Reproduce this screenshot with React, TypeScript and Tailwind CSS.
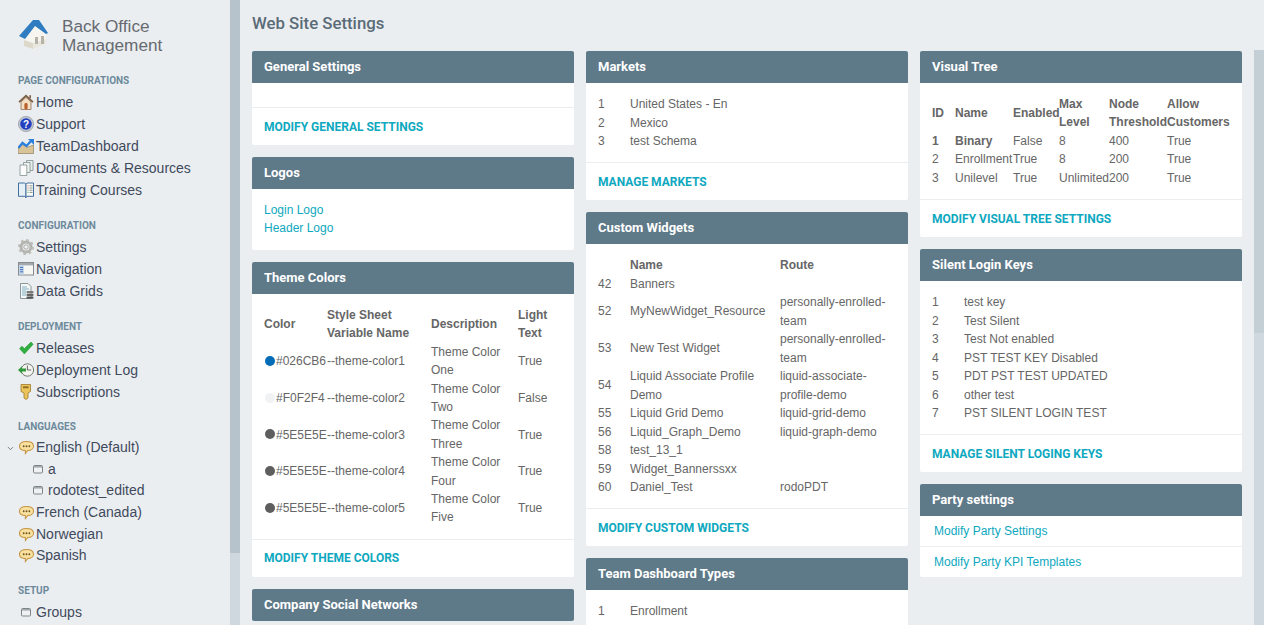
import type { ReactNode } from 'react'
import { ChevronDown } from 'lucide-react'

const HouseLogo = () => (
  <svg width="32" height="32" viewBox="0 0 32 32" className="shrink-0 mb-[3px]">
    <path d="M7 20 L17 7 L28 15 L28 25 L15 30 L6 27 Z" fill="#f6f5f0" />
    <path d="M6 21 L15 24 L15 30 L6 27 Z" fill="#dcd9cb" />
    <path d="M15 24 L28 20 L28 25 L15 30 Z" fill="#e9e7dd" />
    <rect x="17" y="18" width="3" height="7" fill="#b5b3a8" />
    <rect x="23" y="17" width="3" height="8" fill="#b5b3a8" />
    <path d="M1 17 L15 1 L21 1 L30 14 L28 15 L17 7 L7 20 Z" fill="#2f7cc1" />
  </svg>
)

const HomeIcon = () => (
  <svg width="16" height="16" viewBox="0 0 16 16">
    <path d="M3 8 L8 3.4 L13 8 V15.5 H3 Z" fill="#f3e0c4" stroke="#8f7258" strokeWidth=".8" />
    <path d="M8 .6 L15.6 7.6 L14.4 8.8 L8 3 L1.6 8.8 L.4 7.6 Z" fill="#7d6048" />
    <rect x="11.4" y="1.2" width="1.6" height="3" fill="#7d6048" />
    <rect x="6.4" y="9" width="3.2" height="6.5" rx="1.4" fill="#b9602a" />
  </svg>
)

const SupportIcon = () => (
  <svg width="16" height="16" viewBox="0 0 16 16">
    <circle cx="8" cy="8" r="7.6" fill="#c2c8d0" stroke="#7f8894" strokeWidth=".6" />
    <circle cx="8" cy="8" r="5.8" fill="#2340c0" />
    <text x="8" y="11.6" textAnchor="middle" fontSize="10" fontWeight="700" fill="#fff" fontFamily="Liberation Sans">?</text>
  </svg>
)

const DashIcon = () => (
  <svg width="16" height="16" viewBox="0 0 16 16">
    <path d="M0 15.5 V9 L5 6.5 L9 9.5 L15.5 7 V15.5 Z" fill="#d9c49a" stroke="#8f805e" strokeWidth=".7" />
    <path d="M.3 10 L4.5 5 L8.5 8 L13 3" fill="none" stroke="#2f80da" strokeWidth="2.4" />
    <path d="M10 1 H16 V7 Z" fill="#2f80da" />
  </svg>
)

const DocsIcon = () => (
  <svg width="16" height="16" viewBox="0 0 16 16">
    <path d="M8.5 .5 H15 V10.5 H8.5 Z" fill="#e6ecea" stroke="#7f8f8f" strokeWidth=".8" />
    <path d="M5.5 2.5 H12 V12.5 H5.5 Z" fill="#eef2f0" stroke="#7f8f8f" strokeWidth=".8" />
    <path d="M2 5 H8.8 V15.5 H2 Z" fill="#fbfcfb" stroke="#7f8f8f" strokeWidth=".8" />
  </svg>
)

const BookIcon = () => (
  <svg width="16" height="16" viewBox="0 0 16 16">
    <path d="M.5 1 H6.5 L8 2.2 V15.5 L6.5 14.3 H.5 Z" fill="#e4f0f6" stroke="#2f6096" strokeWidth=".9" />
    <path d="M15.5 1 H9 L8 2.2 V15.5 L9 14.3 H15.5 Z" fill="#fbfbf6" stroke="#2f6096" strokeWidth=".9" />
    <path d="M11.5 3.8h3M11.5 6h3M11.5 8.2h3M11.5 10.4h3" stroke="#7a8a8a" strokeWidth=".9" />
    <path d="M9.5 3.8h1M9.5 6h1" stroke="#d0503c" strokeWidth=".9" />
    <path d="M9.5 8.2h1M9.5 10.4h1" stroke="#3fa04c" strokeWidth=".9" />
  </svg>
)

const GearIcon = () => (
  <svg width="16" height="16" viewBox="0 0 16 16">
    <circle cx="8" cy="8" r="5" fill="none" stroke="#b4b4b0" strokeWidth="3" />
    <circle cx="8" cy="8" r="7" fill="none" stroke="#bcbcb8" strokeWidth="2" strokeDasharray="2.6 2.9" />
    <circle cx="8" cy="8" r="2.2" fill="#f2f2f0" stroke="#8e8e8a" strokeWidth=".7" />
  </svg>
)

const NavIcon = () => (
  <svg width="16" height="16" viewBox="0 0 16 16">
    <rect x=".5" y="1.5" width="15" height="12.5" fill="#f6f6f2" stroke="#878b90" />
    <rect x="1" y="2" width="14" height="2.4" fill="#a4a9ae" />
    <rect x="1" y="4.4" width="5" height="9" fill="#c5d6ec" />
    <path d="M2 6.4h3M2 8.6h3M2 10.8h3" stroke="#3e6fb4" />
  </svg>
)

const GridsIcon = () => (
  <svg width="16" height="16" viewBox="0 0 16 16">
    <path d="M2.5 .5 H10 L13 3.5 V15.5 H2.5 Z" fill="#f4f7f5" stroke="#6f8080" strokeWidth=".8" />
    <path d="M4 4h5M4 6h7M4 8h4M4 10h4M4 12h4" stroke="#5f9fb4" strokeWidth=".8" />
    <rect x="8.5" y="8" width="7" height="2.2" rx=".8" fill="#7a7a7a" />
    <rect x="8.5" y="10.8" width="7" height="2.2" rx=".8" fill="#666" />
    <rect x="8.5" y="13.5" width="7" height="2.2" rx=".8" fill="#555" />
  </svg>
)

const CheckIcon = () => (
  <svg width="16" height="16" viewBox="0 0 16 16">
    <path d="M1.5 8.6 L4 6.2 L6.4 8.6 L13 2 L15.2 4.2 L6.4 14 Z" fill="#2fb040" stroke="#1f8a2c" strokeWidth=".5" />
  </svg>
)

const LogIcon = () => (
  <svg width="16" height="16" viewBox="0 0 16 16">
    <circle cx="9.4" cy="8" r="6.2" fill="#f3f4ef" stroke="#6f7a6f" strokeWidth="1" />
    <path d="M9.4 3.6 V8 H13.2" fill="none" stroke="#444" strokeWidth=".8" />
    <path d="M0 8 L4 4.2 V6.6 H8 V9.4 H4 V11.8 Z" fill="#2f9a3c" />
  </svg>
)

const KeyIcon = () => (
  <svg width="16" height="16" viewBox="0 0 16 16">
    <path d="M3 .5 H12.5 V7.5 L10 9 V14 L8 15.5 L6 14 V9 L3 7.5 Z" fill="#eac35a" stroke="#a07a26" strokeWidth=".8" />
    <rect x="5" y="2.4" width="5.5" height="1.8" fill="#8a6a20" />
  </svg>
)

const BubbleIcon = () => (
  <svg width="15" height="15" viewBox="0 0 16 16" className="ml-px">
    <path d="M8 1.5 C12.5 1.5 15.5 3.4 15.5 6.6 C15.5 9.4 12.8 11.2 9.4 11.2 L6.8 14.4 L6.8 11.2 C3.2 11 .5 9.4 .5 6.6 C.5 3.4 3.5 1.5 8 1.5 Z" fill="#f8e09e" stroke="#c59442" strokeWidth="1.1" />
    <circle cx="5" cy="6.6" r="1" fill="#6f5220" />
    <circle cx="8" cy="6.6" r="1" fill="#6f5220" />
    <circle cx="11" cy="6.6" r="1" fill="#6f5220" />
  </svg>
)

const WindowIcon = () => (
  <svg width="10" height="9" viewBox="0 0 10 9" className="shrink-0">
    <rect x=".5" y=".5" width="9" height="7.5" rx="1" fill="#f0f1f2" stroke="#7d8488" />
    <rect x="1" y="1" width="8" height="1.6" fill="#a4aaae" />
  </svg>
)

function SideHeading({ children }: { children: ReactNode }) {
  return (
    <div className="font-['Roboto',sans-serif] text-[10px] leading-[14px] font-bold text-[#6d8a9c] uppercase pl-[18px]">
      {children}
    </div>
  )
}

function SideItem({ icon, label, h = 'h-[22px]' }: { icon: ReactNode; label: string; h?: string }) {
  return (
    <div className={`flex items-center ${h} pl-[18px] text-[14px] text-[#3f4a5c]`}>
      <span className="w-[18px] h-4 flex items-center shrink-0">{icon}</span>
      <span className="whitespace-nowrap">{label}</span>
    </div>
  )
}

function Sidebar() {
  return (
    <aside className="w-[230px] h-full shrink-0 bg-[#ebeef1] font-['Liberation_Sans',Arial,sans-serif] overflow-hidden">
      <div className="flex items-center gap-3 pl-[18px] pt-[17px]">
        <HouseLogo />
        <div className="text-[17.2px] leading-[19px] text-[#666a70]">
          Back Office
          <br />
          Management
        </div>
      </div>
      <div className="mt-[19px]">
        <SideHeading>Page Configurations</SideHeading>
        <div className="mt-[3px]">
          <SideItem icon={<HomeIcon />} label="Home" />
          <SideItem icon={<SupportIcon />} label="Support" />
          <SideItem icon={<DashIcon />} label="TeamDashboard" />
          <SideItem icon={<DocsIcon />} label="Documents & Resources" />
          <SideItem icon={<BookIcon />} label="Training Courses" />
        </div>
      </div>
      <div className="mt-[18px]">
        <SideHeading>Configuration</SideHeading>
        <div className="mt-[3px]">
          <SideItem icon={<GearIcon />} label="Settings" />
          <SideItem icon={<NavIcon />} label="Navigation" />
          <SideItem icon={<GridsIcon />} label="Data Grids" />
        </div>
      </div>
      <div className="mt-[18px]">
        <SideHeading>Deployment</SideHeading>
        <div className="mt-[3px]">
          <SideItem icon={<CheckIcon />} label="Releases" />
          <SideItem icon={<LogIcon />} label="Deployment Log" />
          <SideItem icon={<KeyIcon />} label="Subscriptions" />
        </div>
      </div>
      <div className="mt-[17px]">
        <SideHeading>Languages</SideHeading>
        <div className="mt-[3px]">
          <div className="relative">
            <ChevronDown className="absolute left-[6px] top-[7px] w-[9px] h-[9px] text-[#555]" strokeWidth={2} />
            <SideItem icon={<BubbleIcon />} label="English (Default)" h="h-[21.6px]" />
          </div>
          <div className="flex items-center gap-[5px] h-[21.6px] pl-[33px] text-[14px] text-[#3f4a5c]">
            <WindowIcon />a
          </div>
          <div className="flex items-center gap-[5px] h-[21.6px] pl-[33px] text-[14px] text-[#3f4a5c]">
            <WindowIcon />
            rodotest_edited
          </div>
          <SideItem icon={<BubbleIcon />} label="French (Canada)" h="h-[21.6px]" />
          <SideItem icon={<BubbleIcon />} label="Norwegian" h="h-[21.6px]" />
          <SideItem icon={<BubbleIcon />} label="Spanish" h="h-[21.6px]" />
        </div>
      </div>
      <div className="mt-[17px]">
        <SideHeading>Setup</SideHeading>
        <div className="mt-[4px]">
          <div className="flex items-center gap-[6px] h-[22px] pl-[21px] text-[14px] text-[#3f4a5c]">
            <WindowIcon />
            <span className="ml-[-1px]">Groups</span>
          </div>
        </div>
      </div>
    </aside>
  )
}

function Panel({ title, children }: { title: string; children?: ReactNode }) {
  return (
    <section className="rounded-[2px] overflow-hidden bg-white shrink-0">
      <div className="h-8 bg-[#5e7988] pl-3 flex items-center font-['Roboto',sans-serif] text-[13px] font-bold text-white">
        {title}
      </div>
      {children}
    </section>
  )
}

function Action({ label }: { label: string }) {
  return (
    <div className="h-[38px] border-t border-[#ebeef1] pl-3 flex items-center font-['Roboto',sans-serif] text-[12px] font-bold text-[#0ea8c0] uppercase">
      {label}
    </div>
  )
}

function IdRows({ rows }: { rows: [string, string][] }) {
  return (
    <div className="pl-3 pt-3 pb-[11.5px] text-[12px] leading-[18.5px] text-[#666]">
      {rows.map(([id, name]) => (
        <div key={id} className="flex">
          <span className="w-8">{id}</span>
          <span>{name}</span>
        </div>
      ))}
    </div>
  )
}

const themeRows = [
  ['#026CB6', 'bg-[#026cb6]', '1', 'One', 'True'],
  ['#F0F2F4', 'bg-[#f0f2f4]', '2', 'Two', 'False'],
  ['#5E5E5E', 'bg-[#5e5e5e]', '3', 'Three', 'True'],
  ['#5E5E5E', 'bg-[#5e5e5e]', '4', 'Four', 'True'],
  ['#5E5E5E', 'bg-[#5e5e5e]', '5', 'Five', 'True'],
]

function ThemeColors() {
  const cols = 'grid grid-cols-[63px_104px_87px_1fr] items-center'
  return (
    <div className="px-3 pt-[12px] pb-[12px] text-[12px] leading-[18.4px] text-[#666]">
      <div className={`${cols} font-bold h-[36px] mb-[1px]`}>
        <span>Color</span>
        <span>
          Style Sheet
          <br />
          Variable Name
        </span>
        <span>Description</span>
        <span>
          Light
          <br />
          Text
        </span>
      </div>
      {themeRows.map(([hex, bg, n, word, light]) => (
        <div key={n} className={`${cols} h-[36.8px]`}>
          <span className="flex items-center whitespace-nowrap">
            <span className={`w-[10px] h-[10px] rounded-full ml-px mr-px mb-[1px] shrink-0 ${bg}`} />
            {hex}
          </span>
          <span>--theme-color{n}</span>
          <span>
            Theme Color
            <br />
            {word}
          </span>
          <span>{light}</span>
        </div>
      ))}
    </div>
  )
}

const widgetRows: [string, ReactNode, ReactNode][] = [
  ['42', 'Banners', ''],
  ['52', 'MyNewWidget_Resource', <>personally-enrolled-<br />team</>],
  ['53', 'New Test Widget', <>personally-enrolled-<br />team</>],
  ['54', <>Liquid Associate Profile<br />Demo</>, <>liquid-associate-<br />profile-demo</>],
  ['55', 'Liquid Grid Demo', 'liquid-grid-demo'],
  ['56', 'Liquid_Graph_Demo', 'liquid-graph-demo'],
  ['58', 'test_13_1', ''],
  ['59', 'Widget_Bannerssxx', ''],
  ['60', 'Daniel_Test', 'rodoPDT'],
]

function Widgets() {
  const cols = 'grid grid-cols-[32px_150px_1fr] items-center'
  return (
    <div className="pl-3 pt-[12px] pb-[11.5px] text-[12px] leading-[18.5px] text-[#666]">
      <div className={`${cols} font-bold`}>
        <span />
        <span>Name</span>
        <span>Route</span>
      </div>
      {widgetRows.map(([id, name, route]) => (
        <div key={id} className={cols}>
          <span>{id}</span>
          <span>{name}</span>
          <span>{route}</span>
        </div>
      ))}
    </div>
  )
}

const treeRows = [
  ['1', 'Binary', 'False', '8', '400', 'True'],
  ['2', 'Enrollment', 'True', '8', '200', 'True'],
  ['3', 'Unilevel', 'True', 'Unlimited', '200', 'True'],
]

function VisualTree() {
  const cols = 'grid grid-cols-[23px_58px_46px_50px_58px_1fr] items-center whitespace-nowrap'
  return (
    <div className="pl-3 pt-[12px] pb-[12px] text-[12px] leading-[18.4px] text-[#666]">
      <div className={`${cols} font-bold`}>
        <span>ID</span>
        <span>Name</span>
        <span>Enabled</span>
        <span>
          Max
          <br />
          Level
        </span>
        <span>
          Node
          <br />
          Threshold
        </span>
        <span>
          Allow
          <br />
          Customers
        </span>
      </div>
      {treeRows.map((r, i) => (
        <div key={r[0]} className={cols}>
          {r.map((c, j) => (
            <span key={j} className={i === 0 && j < 2 ? 'font-bold' : ''}>
              {c}
            </span>
          ))}
        </div>
      ))}
    </div>
  )
}

function Scrollbar({ thumb, thumbColor }: { thumb: string; thumbColor: string }) {
  return (
    <div className="w-[10px] h-full shrink-0 bg-[#cfd8de]">
      <div className={`w-full ${thumbColor} ${thumb}`} />
    </div>
  )
}

export default function App() {
  return (
    <div className="flex h-[625px] w-[1264px] overflow-hidden bg-[#ebeef1] font-['Liberation_Sans',Arial,sans-serif]">
      <Sidebar />
      <Scrollbar thumb="h-[553px]" thumbColor="bg-[#b6c3cc]" />
      <main className="flex-1 min-w-0 pl-3 overflow-hidden">
        <h1 className="h-[51px] pt-[13px] font-['Roboto',sans-serif] text-[16.8px] leading-[20px] font-medium text-[#5a6b78]">
          Web Site Settings
        </h1>
        <div className="flex gap-3">
          <div className="w-[322px] flex flex-col gap-3">
            <Panel title="General Settings">
              <div className="h-6" />
              <Action label="Modify General Settings" />
            </Panel>
            <Panel title="Logos">
              <div className="px-3 py-3 text-[12px] leading-[18.4px] text-[#0ea8c0]">
                <div>Login Logo</div>
                <div>Header Logo</div>
              </div>
            </Panel>
            <Panel title="Theme Colors">
              <ThemeColors />
              <Action label="Modify Theme Colors" />
            </Panel>
            <Panel title="Company Social Networks" />
          </div>
          <div className="w-[322px] flex flex-col gap-3">
            <Panel title="Markets">
              <IdRows rows={[['1', 'United States - En'], ['2', 'Mexico'], ['3', 'test Schema']]} />
              <Action label="Manage Markets" />
            </Panel>
            <Panel title="Custom Widgets">
              <Widgets />
              <Action label="Modify Custom Widgets" />
            </Panel>
            <Panel title="Team Dashboard Types">
              <IdRows rows={[['1', 'Enrollment']]} />
            </Panel>
          </div>
          <div className="w-[322px] flex flex-col gap-3">
            <Panel title="Visual Tree">
              <VisualTree />
              <Action label="Modify Visual Tree Settings" />
            </Panel>
            <Panel title="Silent Login Keys">
              <IdRows
                rows={[
                  ['1', 'test key'],
                  ['2', 'Test Silent'],
                  ['3', 'Test Not enabled'],
                  ['4', 'PST TEST KEY Disabled'],
                  ['5', 'PDT PST TEST UPDATED'],
                  ['6', 'other test'],
                  ['7', 'PST SILENT LOGIN TEST'],
                ]}
              />
              <Action label="Manage Silent Loging Keys" />
            </Panel>
            <Panel title="Party settings">
              <div className="h-[30px] pl-[14px] flex items-center text-[12px] text-[#0ea8c0]">Modify Party Settings</div>
              <div className="h-[31px] pl-[14px] flex items-center border-t border-[#ebeef1] text-[12px] text-[#0ea8c0]">
                Modify Party KPI Templates
              </div>
            </Panel>
          </div>
        </div>
      </main>
      <div className="w-[10px] h-full shrink-0 pt-[50px]">
        <Scrollbar thumb="h-[283px]" thumbColor="bg-[#c4cfd5]" />
      </div>
    </div>
  )
}
